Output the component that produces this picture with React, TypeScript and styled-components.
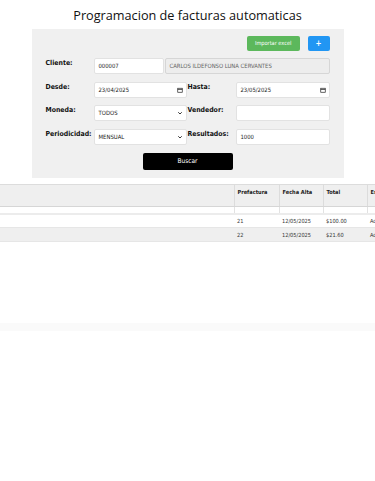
import styled, { createGlobalStyle } from 'styled-components';

type Row = {
  prefactura: string;
  fecha: string;
  total: string;
  estado: string;
};

const rows: Row[] = [
  { prefactura: '21', fecha: '12/05/2025', total: '$100.00', estado: 'Activa' },
  { prefactura: '22', fecha: '12/05/2025', total: '$21.60', estado: 'Activa' },
];

function CalendarIcon() {
  return (
    <svg width="6" height="6" viewBox="0 0 12 12" fill="none" stroke="#222" strokeWidth="1.4">
      <rect x="1.5" y="2.5" width="9" height="8" />
      <line x1="1.5" y1="5" x2="10.5" y2="5" />
    </svg>
  );
}

function ChevronIcon() {
  return (
    <svg width="6" height="6" viewBox="0 0 12 12" fill="none" stroke="#222" strokeWidth="1.8">
      <polyline points="2.5,4.5 6,8 9.5,4.5" />
    </svg>
  );
}

export default function App() {
  return (
    <Page>
      <GlobalStyle />
      <Title>Programacion de facturas automaticas</Title>
      <Panel>
        <ButtonBar>
          <ActionButton color="#5cb85c">Importar excel</ActionButton>
          <ActionButton color="#2196f3" $bold>
            +
          </ActionButton>
        </ButtonBar>
        <FormGrid>
          <Label>Cliente:</Label>
          <ClientGroup>
            <Field $width="70px">000007</Field>
            <Field $disabled>CARLOS ILDEFONSO LUNA CERVANTES</Field>
          </ClientGroup>

          <Label>Desde:</Label>
          <Field>
            <span>23/04/2025</span>
            <CalendarIcon />
          </Field>
          <Label $inner>Hasta:</Label>
          <Field>
            <span>23/05/2025</span>
            <CalendarIcon />
          </Field>

          <Label>Moneda:</Label>
          <Field>
            <span>TODOS</span>
            <ChevronIcon />
          </Field>
          <Label $inner>Vendedor:</Label>
          <Field />

          <Label>Periodicidad:</Label>
          <Field>
            <span>MENSUAL</span>
            <ChevronIcon />
          </Field>
          <Label $inner>Resultados:</Label>
          <Field>1000</Field>
        </FormGrid>
        <SearchButton>Buscar</SearchButton>
      </Panel>

      <TableWrap>
        <Table>
          <colgroup>
            <col style={{ width: 234 }} />
            <col style={{ width: 45 }} />
            <col style={{ width: 44 }} />
            <col style={{ width: 44 }} />
            <col style={{ width: 60 }} />
          </colgroup>
          <thead>
            <tr>
              <Th></Th>
              <Th>Prefactura</Th>
              <Th>Fecha Alta</Th>
              <Th>Total</Th>
              <Th>Estado</Th>
            </tr>
            <FilterRow>
              <td />
              <td />
              <td />
              <td />
              <td />
            </FilterRow>
          </thead>
          <tbody>
            {rows.map((r, i) => (
              <DataRow key={r.prefactura} $striped={i % 2 === 1}>
                <td></td>
                <td>{r.prefactura}</td>
                <td>{r.fecha}</td>
                <td>{r.total}</td>
                <td>{r.estado}</td>
              </DataRow>
            ))}
          </tbody>
        </Table>
      </TableWrap>
      <ScrollStrip />
    </Page>
  );
}

const GlobalStyle = createGlobalStyle`
  html, body {
    margin: 0;
    padding: 0;
    background: #fff;
    overflow: hidden;
  }
  body {
    font-family: "DejaVu Sans", sans-serif;
    font-stretch: condensed;
    color: #222;
  }
  button {
    font-family: "DejaVu Sans", sans-serif;
    font-stretch: condensed;
  }
`;

const Page = styled.div`
  width: 375px;
  padding-top: 5px;
`;

const Title = styled.h1`
  margin: 0 0 4px;
  height: 20px;
  line-height: 20px;
  text-align: center;
  font-family: "Open Sans", sans-serif;
  font-stretch: normal;
  font-weight: 400;
  font-size: 12.7px;
  color: #111;
`;

const Panel = styled.div`
  width: 312px;
  margin: 0 auto;
  box-sizing: border-box;
  background: #f0f0f0;
  padding: 7px 14px 8px;
  display: flex;
  flex-direction: column;
`;

const ButtonBar = styled.div`
  display: flex;
  justify-content: flex-end;
  gap: 8px;
`;

const ActionButton = styled.button<{ color: string; $bold?: boolean }>`
  height: 15px;
  min-width: 22px;
  padding: 0 ${(p) => (p.$bold ? '7px' : '8px')};
  border: none;
  border-radius: 2px;
  background: ${(p) => p.color};
  color: #fff;
  font-size: ${(p) => (p.$bold ? '8px' : '5.6px')};
  font-weight: ${(p) => (p.$bold ? 700 : 400)};
  line-height: 15px;
`;

const FormGrid = styled.div`
  margin-top: 7px;
  display: grid;
  grid-template-columns: 48px 93px 49px 94px;
  grid-auto-rows: 16px;
  row-gap: 7.5px;
`;

const Label = styled.div<{ $inner?: boolean }>`
  padding-left: ${(p) => (p.$inner ? '1px' : '0')};
  font-weight: 700;
  font-size: 6.9px;
  line-height: 10px;
  color: #111;
  white-space: nowrap;
`;

const ClientGroup = styled.div`
  grid-column: 2 / 5;
  display: flex;
  gap: 1px;
`;

const Field = styled.div<{ $width?: string; $disabled?: boolean }>`
  box-sizing: border-box;
  height: 16px;
  ${(p) => (p.$width ? `width: ${p.$width}; flex: none;` : 'flex: 1;')}
  display: flex;
  align-items: center;
  justify-content: space-between;
  padding: 0 3px 0 4px;
  background: ${(p) => (p.$disabled ? '#ededed' : '#fff')};
  border: 1px solid ${(p) => (p.$disabled ? '#d6d6d6' : '#e2e2e2')};
  border-radius: 2px;
  font-size: 5.9px;
  color: ${(p) => (p.$disabled ? '#666' : '#222')};
  white-space: nowrap;
`;

const SearchButton = styled.button`
  align-self: center;
  margin-top: 8px;
  width: 90px;
  height: 17px;
  border: none;
  border-radius: 2px;
  background: #000;
  color: #fff;
  font-size: 6.5px;
`;

const TableWrap = styled.div`
  margin-top: 6px;
  height: 139px;
  overflow: hidden;
`;

const Table = styled.table`
  width: 427px;
  border-collapse: collapse;
  table-layout: fixed;
  font-size: 5.6px;
  color: #333;
`;

const Th = styled.th`
  height: 22px;
  box-sizing: border-box;
  padding: 4px 3px 0;
  vertical-align: top;
  text-align: left;
  font-weight: 700;
  background: #efefef;
  border-top: 1px solid #dcdcdc;
  border-bottom: 1px solid #d6d6d6;
  border-right: 1px solid #dcdcdc;
  color: #222;
  white-space: nowrap;
`;

const FilterRow = styled.tr`
  td {
    height: 6px;
    padding: 0;
    background: #fff;
    border-right: 1px solid #e2e2e2;
    border-bottom: 2px solid #ececec;
  }
`;

const DataRow = styled.tr<{ $striped: boolean }>`
  background: ${(p) => (p.$striped ? '#efefef' : '#fff')};

  td {
    height: 14px;
    box-sizing: border-box;
    padding: 0 3px;
    border-bottom: 1px solid #e6e6e6;
    white-space: nowrap;
    overflow: hidden;
  }
`;

const ScrollStrip = styled.div`
  height: 8px;
  background: #fafafa;
`;
